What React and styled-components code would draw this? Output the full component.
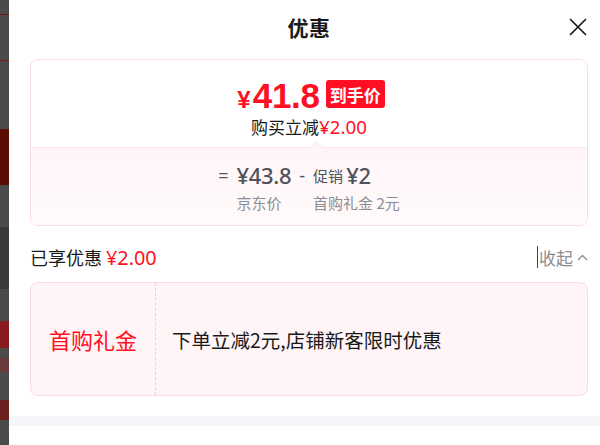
import React from "react";
import styled, { createGlobalStyle } from "styled-components";

const Global = createGlobalStyle`
  html, body { margin: 0; padding: 0; background: #fff; }
  body { font-family: "Noto Sans CJK SC", "Noto Sans", sans-serif; }
  * { box-sizing: border-box; }
`;

const RED = "#ff0f23";
const PINK_BORDER = "#ffd9e0";

const Screen = styled.div`
  display: flex;
  width: 600px;
  height: 445px;
  overflow: hidden;
`;

const Backdrop = styled.div`
  width: 9px;
  flex: none;
  display: flex;
  flex-direction: column;
  background: #4b4b4b;
`;

const Patch = styled.div`
  height: ${(p) => p.h}px;
  background: ${(p) => p.bg || "transparent"};
  border-bottom: ${(p) => (p.line ? `1px solid ${p.line}` : "none")};
  flex: none;
`;

const Modal = styled.div`
  flex: 1;
  display: flex;
  flex-direction: column;
  background: #fff;
`;

const Content = styled.div`
  padding: 0 12px 0 21px;
  display: flex;
  flex-direction: column;
`;

const Header = styled.div`
  height: 54px;
  display: flex;
  align-items: center;
  justify-content: center;
  position: relative;
`;

const Title = styled.h1`
  margin: 0;
  font-size: 21px;
  font-weight: 700;
  color: #1a1a1a;
  letter-spacing: 0.5px;
`;

const Close = styled.button`
  position: absolute;
  right: 1px;
  top: 18px;
  width: 18px;
  height: 18px;
  padding: 0;
  border: 0;
  background: none;
  display: flex;
`;

const PriceCard = styled.div`
  margin-top: 5px;
  border: 1px solid ${PINK_BORDER};
  border-radius: 8px;
  overflow: hidden;
`;

const PriceTop = styled.div`
  padding: 20px 0 10px;
  display: flex;
  flex-direction: column;
  align-items: center;
  background: #fff;
`;

const PriceRow = styled.div`
  height: 28px;
  display: flex;
  align-items: center;
  gap: 6px;
  transform: translateX(2px);
`;

const BigPrice = styled.div`
  display: flex;
  align-items: baseline;
  color: ${RED};
  font-family: "Liberation Sans", Arial, sans-serif;
  font-weight: 700;
  line-height: 1;
  transform: translateY(1px);
`;

const Yen = styled.span`
  font-size: 24px;
  margin-right: 2px;
`;

const Amount = styled.span`
  font-size: 35px;
  letter-spacing: -0.3px;
`;

const Badge = styled.span`
  height: 28px;
  padding: 0 4px;
  border-radius: 3px;
  background: ${RED};
  color: #fff;
  font-size: 17px;
  font-weight: 700;
  display: flex;
  align-items: center;
  line-height: 1;
`;

const SubLine = styled.div`
  margin-top: 9px;
  font-size: 17px;
  line-height: 20px;
  color: #1a1a1a;
`;

const Red = styled.span`
  color: ${RED};
  font-family: "Noto Sans", sans-serif;
  font-size: 1.1em;
`;

const PriceBottom = styled.div`
  position: relative;
  border-top: 1px solid #ffe6ea;
  background: linear-gradient(#fff5f7, #fffafb);
  padding: 15px 0 12px;
  display: flex;
  justify-content: center;
  align-items: flex-start;
  gap: 8px;

  &::before {
    content: "";
    position: absolute;
    top: -5px;
    left: 281px;
    width: 8px;
    height: 8px;
    background: #fff5f7;
    border-top: 1px solid #ffe6ea;
    border-left: 1px solid #ffe6ea;
    transform: rotate(45deg);
  }
`;

const Op = styled.span`
  height: 24px;
  line-height: 24px;
  font-size: 18px;
  color: #505259;
  font-family: "Noto Sans", sans-serif;
`;

const Term = styled.div`
  display: flex;
  flex-direction: column;
  gap: 6px;
`;

const TermValue = styled.div`
  height: 24px;
  display: flex;
  align-items: center;
  gap: 3px;
  color: #505259;
`;

const TermTag = styled.span`
  font-size: 15px;
`;

const TermNum = styled.span`
  font-family: "Noto Sans", sans-serif;
  font-size: 22px;
  font-weight: 500;
  letter-spacing: -0.3px;
`;

const TermLabel = styled.div`
  font-size: 15px;
  line-height: 20px;
  color: #8c8c94;
`;

const SavedRow = styled.div`
  margin-top: 19px;
  height: 24px;
  display: flex;
  align-items: center;
  justify-content: space-between;
`;

const Saved = styled.div`
  font-size: 18px;
  color: #1a1a1a;
  display: flex;
  align-items: center;
  gap: 4px;
`;

const Collapse = styled.button`
  border: 0;
  background: none;
  padding: 0 0 0 1px;
  border-left: 1px solid #444;
  height: 22px;
  display: flex;
  align-items: center;
  gap: 4px;
  font-family: "Noto Sans CJK SC", sans-serif;
  font-size: 17px;
  color: #8c8c94;
`;

const CouponCard = styled.div`
  margin-top: 13px;
  height: 114px;
  border: 1px solid ${PINK_BORDER};
  border-radius: 8px;
  background: #fff4f6;
  display: flex;
`;

const CouponName = styled.div`
  width: 125px;
  flex: none;
  border-right: 1px dashed #ffc7d0;
  display: flex;
  align-items: center;
  justify-content: center;
  font-size: 22px;
  color: ${RED};
`;

const CouponDesc = styled.div`
  padding-left: 16px;
  display: flex;
  align-items: center;
  font-size: 19.5px;
  color: #1a1a1a;
`;

const Band = styled.div`
  margin-top: 20px;
  height: 10px;
  background: #f5f6fa;
`;

export default function App() {
  return (
    <>
      <Global />
      <Screen>
        <Backdrop>
          <Patch h={15} line="#7a1212" />
          <Patch h={46} line="#7a1212" />
          <Patch h={68} />
          <Patch h={56} bg="#5a0c02" />
          <Patch h={42} />
          <Patch h={62} bg="#3a3a3a" />
          <Patch h={32} />
          <Patch h={27} bg="#8b1a1e" />
          <Patch h={10} />
          <Patch h={14} bg="#6a3a3a" />
          <Patch h={28} />
          <Patch h={20} bg="#6b2020" />
        </Backdrop>
        <Modal>
          <Content>
            <Header>
              <Title>优惠</Title>
              <Close aria-label="关闭">
                <svg width="18" height="18" viewBox="0 0 18 18">
                  <path d="M1.5 1.5 L16.5 16.5 M16.5 1.5 L1.5 16.5" stroke="#1a1a1a" strokeWidth="1.7" strokeLinecap="round" />
                </svg>
              </Close>
            </Header>

            <PriceCard>
              <PriceTop>
                <PriceRow>
                  <BigPrice>
                    <Yen>¥</Yen>
                    <Amount>41.8</Amount>
                  </BigPrice>
                  <Badge>到手价</Badge>
                </PriceRow>
                <SubLine>
                  购买立减<Red>¥2.00</Red>
                </SubLine>
              </PriceTop>
              <PriceBottom>
                <Op>=</Op>
                <Term>
                  <TermValue>
                    <TermNum>¥43.8</TermNum>
                  </TermValue>
                  <TermLabel>京东价</TermLabel>
                </Term>
                <Op>-</Op>
                <Term>
                  <TermValue>
                    <TermTag>促销</TermTag>
                    <TermNum>¥2</TermNum>
                  </TermValue>
                  <TermLabel>首购礼金 2元</TermLabel>
                </Term>
              </PriceBottom>
            </PriceCard>

            <SavedRow>
              <Saved>
                已享优惠<Red>¥2.00</Red>
              </Saved>
              <Collapse>
                收起
                <svg width="11" height="7" viewBox="0 0 11 7">
                  <path d="M1 6 L5.5 1.5 L10 6" fill="none" stroke="#8c8c94" strokeWidth="1.4" />
                </svg>
              </Collapse>
            </SavedRow>

            <CouponCard>
              <CouponName>首购礼金</CouponName>
              <CouponDesc>下单立减2元,店铺新客限时优惠</CouponDesc>
            </CouponCard>
          </Content>
          <Band />
        </Modal>
      </Screen>
    </>
  );
}
